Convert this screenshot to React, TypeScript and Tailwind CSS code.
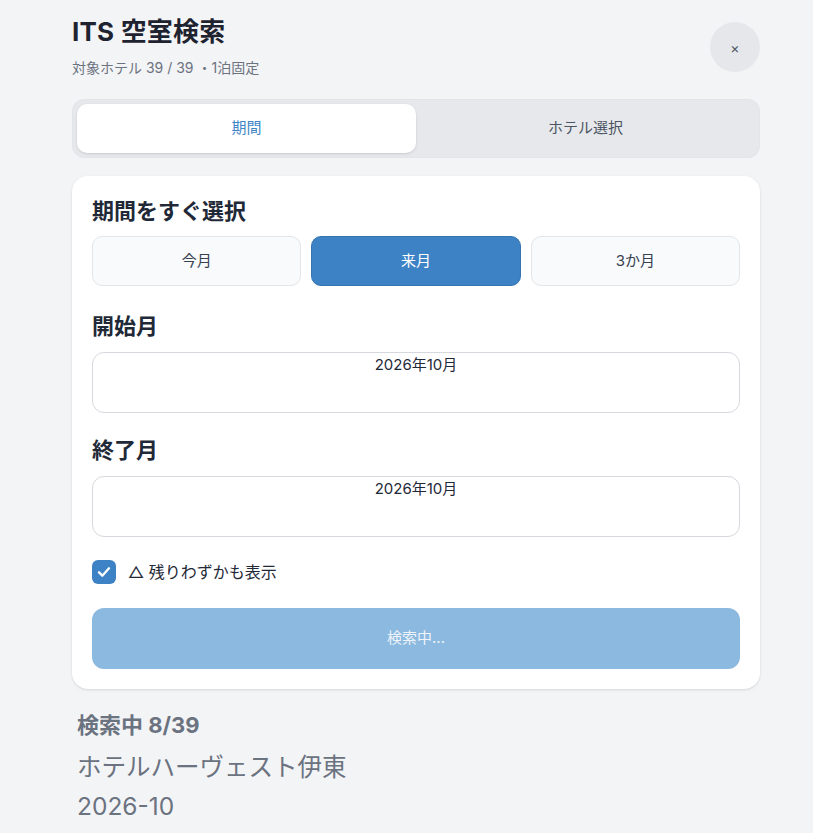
import React from "react";

export default function App() {
  const font = { fontFamily: 'Inter, "Noto Sans CJK JP", sans-serif' };
  return (
    <div className="min-h-[833px] w-full bg-[#f3f4f6]" style={font}>
      <div className="ml-[72px] w-[688px] pt-[16px] pb-4">
        {/* header */}
        <div className="flex items-center justify-between">
          <div>
            <div className="text-[26px] leading-[32px] font-bold tracking-[0.2px] text-[#1f2330]">ITS 空室検索</div>
            <div className="mt-[10px] text-[14px] leading-[20px] text-[#6b7280]">対象ホテル 39 / 39 ・1泊固定</div>
          </div>
          <button className="flex h-[50px] w-[50px] items-center justify-center rounded-full bg-[#e6e7ea] text-[14px] text-[#4b5563]">
            ×
          </button>
        </div>

        {/* tabs */}
        <div className="mt-[21px] grid grid-cols-2 rounded-[12px] border border-[#e2e4e8] bg-[#e6e8eb] p-[4px]">
          <div className="flex h-[49px] items-center justify-center rounded-[10px] bg-white text-[15px] text-[#3f86c8] shadow-sm">
            期間
          </div>
          <div className="flex h-[49px] items-center justify-center text-[15px] text-[#4b5563]">ホテル選択</div>
        </div>

        {/* card */}
        <div className="mt-[18px] rounded-[16px] bg-white px-[20px] pt-[20px] pb-[20px] shadow-sm">
          <div className="text-[22px] leading-[30px] font-bold text-[#1f2937]">期間をすぐ選択</div>
          <div className="mt-[10px] grid grid-cols-3 gap-[10px]">
            <div className="flex h-[50px] items-center justify-center rounded-[10px] border border-[#e3e5e9] bg-[#f9fafb] text-[15px] text-[#374151]">
              今月
            </div>
            <div className="flex h-[50px] items-center justify-center rounded-[10px] border border-[#3574b0] bg-[#3d82c5] text-[15px] text-white">
              来月
            </div>
            <div className="flex h-[50px] items-center justify-center rounded-[10px] border border-[#e3e5e9] bg-[#f9fafb] text-[15px] text-[#374151]">
              3か月
            </div>
          </div>

          <div className="mt-[25px] text-[22px] leading-[30px] font-bold text-[#1f2937]">開始月</div>
          <div className="mt-[11px] h-[61px] rounded-[12px] border border-[#d5d8dd] bg-white pt-[2px] text-center text-[15px] leading-[20px] text-[#1f2937]">
            2026年10月
          </div>

          <div className="mt-[22px] text-[22px] leading-[30px] font-bold text-[#1f2937]">終了月</div>
          <div className="mt-[11px] h-[61px] rounded-[12px] border border-[#d5d8dd] bg-white pt-[2px] text-center text-[15px] leading-[20px] text-[#1f2937]">
            2026年10月
          </div>

          <div className="mt-[23px] flex h-[24px] items-center gap-[12px]">
            <div className="flex h-[24px] w-[24px] items-center justify-center rounded-[6px] bg-[#3d82c5]">
              <svg width="16" height="16" viewBox="0 0 24 24" fill="none" stroke="white" strokeWidth="3.5" strokeLinecap="round" strokeLinejoin="round">
                <path d="M4.5 12.5l5 5L19.5 6.5" />
              </svg>
            </div>
            <span className="text-[16px] text-[#1f2937]">△ 残りわずかも表示</span>
          </div>

          <div className="mt-[24px] flex h-[61px] items-center justify-center rounded-[12px] bg-[#8cb9df] text-[15px] text-[#eef4fa]">
            検索中...
          </div>
        </div>

        {/* status */}
        <div className="ml-[5px] mt-[22px] text-[22px] leading-[28px] font-bold text-[#6b7280]">検索中 8/39</div>
        <div className="ml-[5px] mt-[9px] text-[24.5px] leading-[39px] text-[#6b7280]">ホテルハーヴェスト伊東</div>
        <div className="ml-[5px] text-[24.5px] leading-[39px] text-[#6b7280]">2026-10</div>
      </div>
    </div>
  );
}
